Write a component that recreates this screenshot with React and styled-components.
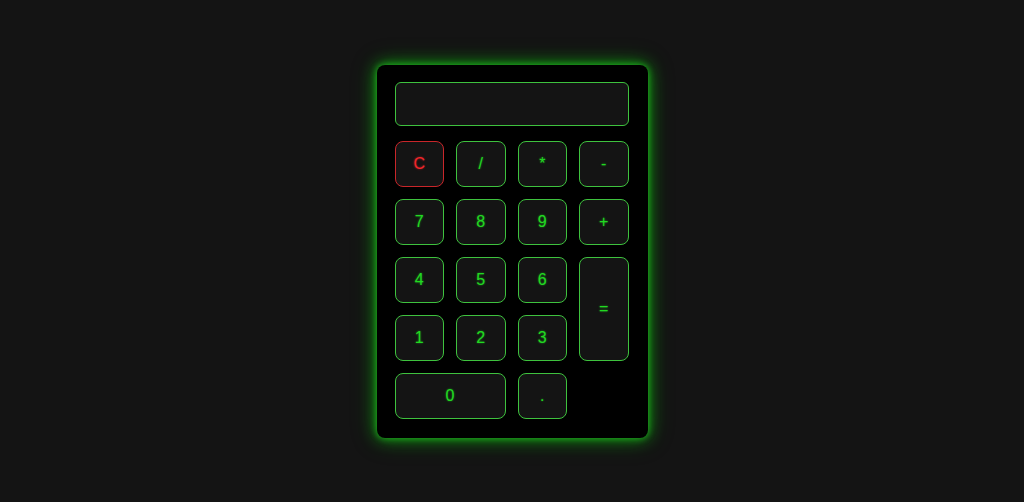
import styled, { createGlobalStyle } from "styled-components";

const GlobalStyle = createGlobalStyle`
  html, body {
    margin: 0;
    padding: 0;
    background: #141414;
    font-family: "Liberation Sans", Arial, sans-serif;
  }
`;

const Page = styled.div`
  min-height: 100vh;
  display: flex;
  align-items: center;
  justify-content: center;
`;

const Calculator = styled.div`
  width: 234px;
  padding: 17px 19px 19px 18px;
  background: #000;
  border-radius: 8px;
  box-shadow: 0 0 6px #1fb01f, 0 0 16px #129a12, 0 0 26px rgba(0, 160, 0, 0.35);
`;

const Display = styled.div`
  box-sizing: border-box;
  height: 44px;
  border: 1px solid #3ec23e;
  border-radius: 6px;
  background: #141414;
  margin-bottom: 15px;
`;

const Keys = styled.div`
  display: grid;
  grid-template-columns: repeat(4, 1fr);
  grid-auto-rows: 46px;
  gap: 12px;
`;

const Key = styled.button`
  box-sizing: border-box;
  margin: 0;
  padding: 0;
  background: #141414;
  border: 1px solid ${(p) => (p.$danger ? "#c9262a" : "#3ec23e")};
  border-radius: 8px;
  color: ${(p) => (p.$danger ? "#f0262a" : "#22d822")};
  text-shadow: 0 0 2px ${(p) => (p.$danger ? "rgba(240,38,42,0.7)" : "rgba(34,216,34,0.7)")};
  font-family: "Liberation Sans", Arial, sans-serif;
  font-size: 16px;
  cursor: pointer;
  grid-column: ${(p) => (p.$wide ? "span 2" : "auto")};
  grid-row: ${(p) => (p.$tall ? "span 2" : "auto")};
`;

const keys = [
  { label: "C", danger: true },
  { label: "/" },
  { label: "*" },
  { label: "-" },
  { label: "7" },
  { label: "8" },
  { label: "9" },
  { label: "+" },
  { label: "4" },
  { label: "5" },
  { label: "6" },
  { label: "=", tall: true },
  { label: "1" },
  { label: "2" },
  { label: "3" },
  { label: "0", wide: true },
  { label: "." },
];

export default function App() {
  return (
    <>
      <GlobalStyle />
      <Page>
        <Calculator>
          <Display />
          <Keys>
            {keys.map((k) => (
              <Key key={k.label} $danger={k.danger} $wide={k.wide} $tall={k.tall}>
                {k.label}
              </Key>
            ))}
          </Keys>
        </Calculator>
      </Page>
    </>
  );
}
